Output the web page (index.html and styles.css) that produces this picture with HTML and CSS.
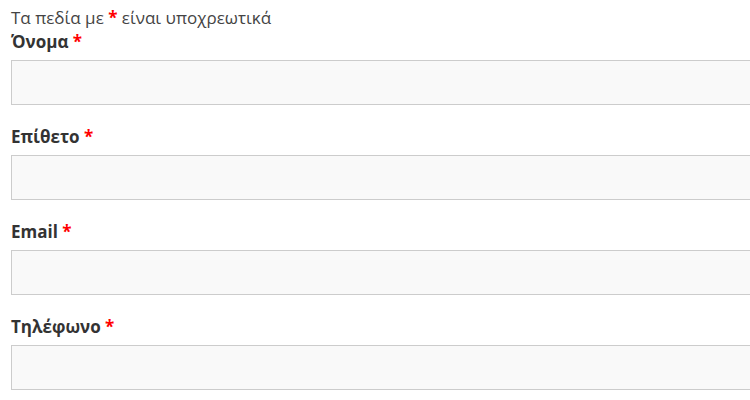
FILE: index.html
```html
<!DOCTYPE html>
<html>
<head>
  <meta charset="utf-8">
  <title>Φόρμα επικοινωνίας</title>
  <link rel="stylesheet" href="styles.css">
</head>
<body>

  <form class="contact">
    <p class="note">Τα πεδία με <span class="req">*</span> είναι υποχρεωτικά</p>

    <div class="field">
      <label for="name">Όνομα <span class="req">*</span></label>
      <input type="text" id="name">
    </div>

    <div class="field">
      <label for="surname">Επίθετο <span class="req">*</span></label>
      <input type="text" id="surname">
    </div>

    <div class="field">
      <label for="email">Email <span class="req">*</span></label>
      <input type="email" id="email">
    </div>

    <div class="field">
      <label for="phone">Τηλέφωνο <span class="req">*</span></label>
      <input type="tel" id="phone">
    </div>
  </form>

</body>
</html>
```

FILE: styles.css
```css
body {
  margin: 0;
  padding: 6px 0 0 11px;
  font-family: 'Open Sans', sans-serif;
  font-size: 17px;
  color: #444;
  background: #fff;
  overflow: hidden;
}

.contact {
  width: 800px;
}

.note {
  margin: 0;
  line-height: 24px;
}

.req {
  color: #f00;
  font-weight: bold;
}

.field {
  margin-bottom: 20px;
}

.field label {
  display: block;
  font-weight: bold;
  line-height: 24px;
  color: #333;
  margin-bottom: 6px;
}

.field input {
  display: block;
  box-sizing: border-box;
  width: 100%;
  height: 45px;
  border: 1px solid #ccc;
  background: #f9f9f9;
  margin: 0;
}
```
